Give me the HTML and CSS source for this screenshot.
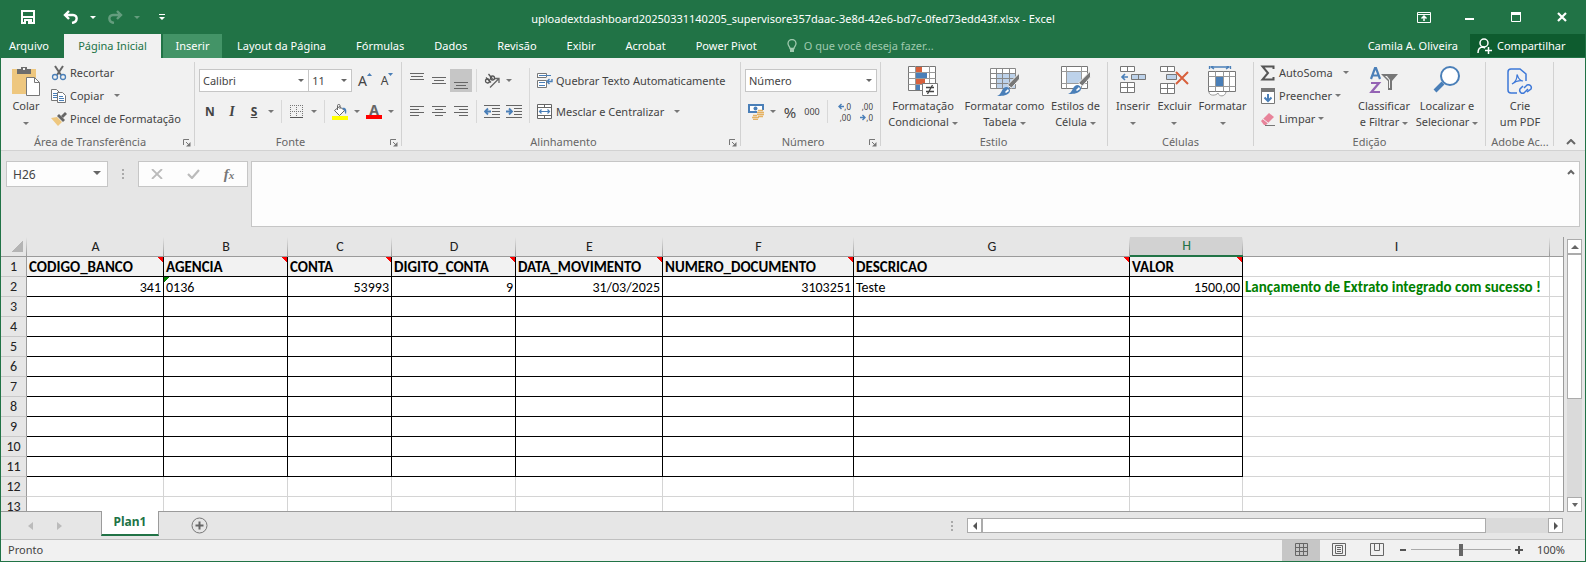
FILE: index.html
```html
<!DOCTYPE html>
<html lang="pt-BR">
<head>
    <meta charset="UTF-8">
    <meta name="viewport" content="width=device-width, initial-scale=1.0">
    <title>uploadextdashboard20250331140205.xlsx - Excel</title>
    <link rel="stylesheet" href="styles.css">
</head>
<body>
<div class="window">
    <header class="titlebar">
        <div class="quick">
            <button class="q-save" aria-label="Salvar"><svg width="14" height="14" viewBox="0 0 14 14"><path d="M1 1h12v12H1z" fill="none" stroke="#fff" stroke-width="2"/><path d="M2 6h10v2H2zM3 9h8v4H3z" fill="#fff"/><path d="M5 11h2v3H5z" fill="#217346"/></svg></button>
            <button class="q-undo" aria-label="Desfazer"><svg width="16" height="14" viewBox="0 0 16 14"><path d="M6 1L2 5l4 4M2 5h8c5 0 5 7-1 8" fill="none" stroke="#fff" stroke-width="2.400"/></svg></button>
            <button class="q-drop" aria-label="Opções de desfazer"><i class="caret"></i></button>
            <button class="q-undo off" aria-label="Refazer"><svg width="16" height="14" viewBox="0 0 16 14"><path d="M10 1l4 4-4 4M14 5H6C1 5 1 12 7 13" fill="none" stroke="#fff" stroke-width="2.400"/></svg></button>
            <button class="q-drop off" aria-label="Opções de refazer"><i class="caret"></i></button>
            <button class="q-custom" aria-label="Personalizar"><svg width="6" height="7" viewBox="0 0 6 7"><path d="M0 0h6v1H0zM0 3h6L3 6z" fill="#fff"/></svg></button>
        </div>
        <div class="title">uploadextdashboard20250331140205_supervisore357daac-3e8d-42e6-bd7c-0fed73edd43f.xlsx - Excel</div>
        <div class="win-buttons">
            <button aria-label="Exibição da faixa"><svg width="14" height="11" viewBox="0 0 14 11"><path d="M.5.5h13v10H.5zM0 2.500h14" fill="none" stroke="#fff"/><path d="M7 4v5M4.500 6.500L7 4l2.500 2.500" fill="none" stroke="#fff" stroke-width="1.500"/></svg></button>
            <button aria-label="Minimizar"><svg width="10" height="10" viewBox="0 0 10 10"><path d="M0 6h9v2H0z" fill="#fff"/></svg></button>
            <button aria-label="Maximizar"><svg width="10" height="10" viewBox="0 0 10 10"><path d="M.5.5h9v9h-9z" fill="none" stroke="#fff"/><path d="M0 0h10v3H0z" fill="#fff"/></svg></button>
            <button aria-label="Fechar"><svg width="10" height="10" viewBox="0 0 10 10"><path d="M1 1l8 8M9 1L1 9" stroke="#fff" stroke-width="2.200"/></svg></button>
        </div>
    </header>

    <nav class="tabs">
        <button class="file">Arquivo</button>
        <button class="active">Página Inicial</button>
        <button class="hover">Inserir</button>
        <button>Layout da Página</button>
        <button>Fórmulas</button>
        <button>Dados</button>
        <button>Revisão</button>
        <button>Exibir</button>
        <button>Acrobat</button>
        <button>Power Pivot</button>
        <label class="tell-me">
            <svg width="10" height="14" viewBox="0 0 10 14"><path d="M3 9.500C3 7.500 1 7 1 4.500a4 4 0 0 1 8 0C9 7 7 7.500 7 9.500z" fill="none" stroke="#9fc9ae" stroke-width="1.300"/><path d="M3 10h4v3H3z" fill="#9fc9ae"/></svg>
            <input type="text" placeholder="O que você deseja fazer..." aria-label="Diga-me">
        </label>
        <span class="user">Camila A. Oliveira</span>
        <button class="share"><svg width="15" height="16" viewBox="0 0 15 16"><circle cx="7" cy="5" r="4" fill="none" stroke="#fff" stroke-width="1.500"/><path d="M1 15c0-4 2-6 5-6l2 1M8 12.500h7M11.500 9v7" fill="none" stroke="#fff" stroke-width="1.500"/></svg>Compartilhar</button>
    </nav>

    <div class="ribbon">
        <section class="group g-clip">
            <div class="group-body">
                <button class="big"><svg width="28" height="31" viewBox="0 0 28 31"><path d="M0 3h24v25H0z" fill="#eec77f"/><path d="M5 3h4V1h6v2h4v5H5z" fill="#6d6d6d"/><path d="M11 2h2v2h-2z" fill="#f1f1f1"/><path d="M14.500 11.500h8l5 5v13h-13z" fill="#fff" stroke="#777"/><path d="M22.500 11.500v5h5" fill="none" stroke="#777"/></svg><span>Colar<br><i class="caret"></i></span></button>
                <div class="stack">
                    <button><svg width="16" height="16" viewBox="0 0 16 16"><path d="M4 1l6 9M12 1L6 10" stroke="#666" stroke-width="2"/><circle cx="4" cy="12" r="2.500" fill="none" stroke="#4a7fb8" stroke-width="1.300"/><circle cx="12" cy="12" r="2.500" fill="none" stroke="#4a7fb8" stroke-width="1.300"/></svg>Recortar</button>
                    <button><svg width="16" height="16" viewBox="0 0 16 16"><path d="M.5 1.500h5l3 3v8h-8z" fill="#fff" stroke="#777"/><path d="M2 5.500h4M2 7.500h4M2 9.500h4" stroke="#4a7fb8"/><path d="M6.500 4.500h5l3 3v7h-8z" fill="#fff" stroke="#777"/><path d="M8 8.500h4M8 10.500h5M8 12.500h5" stroke="#4a7fb8"/></svg>Copiar <i class="caret far"></i></button>
                    <button><svg width="16" height="16" viewBox="0 0 16 16"><path d="M0 7l6-1 5 5-4 4z" fill="#eec77f"/><path d="M6 5l2-2 6 6-2 2z" fill="#666"/><path d="M10 5l4-4 2 2-4 4z" fill="#666"/></svg>Pincel de Formatação</button>
                </div>
            </div>
            <h2>Área de Transferência</h2>
            <button class="launcher" aria-label="Mais opções"><svg width="8" height="8" viewBox="0 0 8 8"><path d="M.5 6V.5H6M3 3l3 3" fill="none" stroke="#777"/><path d="M7.500 3v4.500H3z" fill="#777"/></svg></button>
        </section>

        <section class="group g-font">
            <div class="group-body rows">
                <div class="row">
                    <span class="combo c-font"><select aria-label="Fonte"><option>Calibri</option></select></span>
                    <span class="combo c-size"><select aria-label="Tamanho"><option>11</option></select></span>
                    <button class="tool letter grow" aria-label="Aumentar fonte">A<svg width="5" height="3" viewBox="0 0 5 3"><path d="M0 3L2.500 0 5 3z" fill="#4a7fb8"/></svg></button>
                    <button class="tool letter shrink" aria-label="Diminuir fonte">A<svg width="5" height="3" viewBox="0 0 5 3"><path d="M0 0h5L2.500 3z" fill="#4a7fb8"/></svg></button>
                </div>
                <div class="row">
                    <button class="tool"><b>N</b></button>
                    <button class="tool serif"><b><em>I</em></b></button>
                    <button class="tool"><b><u>S</u></b></button>
                    <button class="drop" aria-label="Sublinhado"><i class="caret"></i></button>
                    <i class="sep"></i>
                    <button class="tool" aria-label="Bordas"><svg width="14" height="14" viewBox="0 0 14 14"><path d="M0 .5h14M0 6.500h14M.5 0v13M6.500 0v13M12.500 0v13" fill="none" stroke="#777" stroke-dasharray="1 1"/><path d="M0 12.500h13" stroke="#555"/></svg></button>
                    <button class="drop" aria-label="Mais bordas"><i class="caret"></i></button>
                    <i class="sep"></i>
                    <button class="tool" aria-label="Cor de preenchimento"><svg width="16" height="16" viewBox="0 0 16 16"><path d="M2.500 6.500l5-4 5 4-5 5z" fill="#fff" stroke="#666"/><path d="M5.500 6V1.500C5.500 0 8 0 8 1.500V5" fill="none" stroke="#666"/><path d="M10 4c4-1 5 2 4 6-1 0-1-3-2-4z" fill="#4a7fb8"/><path d="M0 12h16v4H0z" fill="#ff0"/></svg></button>
                    <button class="drop" aria-label="Cores de preenchimento"><i class="caret"></i></button>
                    <button class="tool color" aria-label="Cor da fonte">A</button>
                    <button class="drop" aria-label="Cores da fonte"><i class="caret"></i></button>
                </div>
            </div>
            <h2>Fonte</h2>
            <button class="launcher" aria-label="Mais opções"><svg width="8" height="8" viewBox="0 0 8 8"><path d="M.5 6V.5H6M3 3l3 3" fill="none" stroke="#777"/><path d="M7.500 3v4.500H3z" fill="#777"/></svg></button>
        </section>

        <section class="group g-align">
            <div class="group-body">
                <div class="rows align-left">
                    <div class="row">
                        <button class="tool" aria-label="Alinhar em cima"><svg width="14" height="16" viewBox="0 0 14 16"><path d="M0 .5h14M1 3.500h12M0 6.500h14" stroke="#666"/></svg></button>
                        <button class="tool" aria-label="Alinhar no meio"><svg width="14" height="16" viewBox="0 0 14 16"><path d="M0 4.500h14M2 7.500h10M0 10.500h14" stroke="#666"/></svg></button>
                        <button class="tool on" aria-label="Alinhar embaixo"><svg width="14" height="16" viewBox="0 0 14 16"><path d="M0 9.500h14M2 12.500h10M0 15.500h14" stroke="#666"/></svg></button>
                        <i class="sep"></i>
                        <button class="tool" aria-label="Orientação"><svg width="16" height="16" viewBox="0 0 16 16"><path d="M6 14.500L14.500 6M10.500 5.500h4.500v4.500" fill="none" stroke="#666" stroke-width="1.300"/><circle cx="3.500" cy="8" r="2" fill="none" stroke="#555" stroke-width="1.300"/><path d="M2 4.500l5 5" stroke="#555" stroke-width="1.300"/><circle cx="8.500" cy="5" r="2" fill="none" stroke="#555" stroke-width="1.300"/><path d="M4.500 1l4 5" stroke="#555" stroke-width="1.300"/></svg></button>
                        <button class="drop" aria-label="Orientações"><i class="caret"></i></button>
                    </div>
                    <div class="row">
                        <button class="tool" aria-label="Alinhar à esquerda"><svg width="14" height="11" viewBox="0 0 14 11"><path d="M0 .5h14M0 3.500h9M0 6.500h14M0 9.500h9" stroke="#666"/></svg></button>
                        <button class="tool" aria-label="Centralizar"><svg width="14" height="11" viewBox="0 0 14 11"><path d="M0 .5h14M3 3.500h8M0 6.500h14M3 9.500h8" stroke="#666"/></svg></button>
                        <button class="tool" aria-label="Alinhar à direita"><svg width="14" height="11" viewBox="0 0 14 11"><path d="M0 .5h14M5 3.500h9M0 6.500h14M5 9.500h9" stroke="#666"/></svg></button>
                        <i class="sep"></i>
                        <button class="tool" aria-label="Diminuir recuo"><svg width="16" height="13" viewBox="0 0 16 13"><path d="M0 .5h16M8 3.500h8M8 6.500h8M8 9.500h8M0 12.500h16" stroke="#666"/><path d="M7 6.500H2M4 3.500l-3 3 3 3" fill="none" stroke="#4a7fb8" stroke-width="1.800"/></svg></button>
                        <button class="tool" aria-label="Aumentar recuo"><svg width="16" height="13" viewBox="0 0 16 13"><path d="M0 .5h16M8 3.500h8M8 6.500h8M8 9.500h8M0 12.500h16" stroke="#666"/><path d="M0 6.500h5M3 3.500l3 3-3 3" fill="none" stroke="#4a7fb8" stroke-width="1.800"/></svg></button>
                    </div>
                </div>
                <div class="rows align-right">
                    <button><svg width="16" height="16" viewBox="0 0 16 16"><path d="M.5 5V.500h9V4M.5 7.500h9v7h-9z" fill="#fff" stroke="#777"/><path d="M.5 4.500h9" stroke="#777"/><path d="M2 2.500h12M2 9.500h6M2 12.500h6" stroke="#4a7fb8"/><path d="M15 6v2.500h-4M12.500 6L10 8.500l2.500 2.500" fill="none" stroke="#4a7fb8" stroke-width="1.400"/></svg>Quebrar Texto Automaticamente</button>
                    <button><svg width="16" height="16" viewBox="0 0 16 16"><path d="M.5.500h14v14H.500zM.5 3.500h14M.5 11.500h14M7.500.500v3M7.500 11.500v3" fill="#fff" stroke="#666"/><path d="M3 7.500h9M4.500 5.500l-2 2 2 2M10.500 5.500l2 2-2 2" fill="none" stroke="#4a7fb8" stroke-width="1.200"/></svg>Mesclar e Centralizar <i class="caret far"></i></button>
                </div>
            </div>
            <h2>Alinhamento</h2>
            <button class="launcher" aria-label="Mais opções"><svg width="8" height="8" viewBox="0 0 8 8"><path d="M.5 6V.5H6M3 3l3 3" fill="none" stroke="#777"/><path d="M7.500 3v4.500H3z" fill="#777"/></svg></button>
        </section>

        <section class="group g-number">
            <div class="group-body rows">
                <div class="row">
                    <span class="combo c-number"><select aria-label="Formato de número"><option>Número</option></select></span>
                </div>
                <div class="row">
                    <button class="tool" aria-label="Formato de contabilização"><svg width="17" height="16" viewBox="0 0 17 16"><path d="M0 0h16v9H0z" fill="#4a7fb8"/><path d="M2 2h12v5H2z" fill="#fff"/><circle cx="7.500" cy="4.500" r="2" fill="#4a7fb8"/><path d="M9 6h7v7H9z" fill="#f1f1f1"/><path d="M4 12h7v4H4z" fill="#f1f1f1"/><path d="M10 6.500h5M9 8.500h7M9 10.500h7M10 12.500h5M5 11.500h4M4 13.500h7M5 15.500h5" stroke="#e5b262" stroke-width="1.300"/></svg></button>
                    <button class="drop" aria-label="Moedas"><i class="caret"></i></button>
                    <button class="tool percent">%</button>
                    <button class="tool thousands">000</button>
                    <i class="sep"></i>
                    <button class="tool decimal" aria-label="Aumentar casas decimais"><span><svg width="6" height="7" viewBox="0 0 6 7"><path d="M6 3.500H1M3.500 1L1 3.500 3.500 6" fill="none" stroke="#4a7fb8" stroke-width="1.400"/></svg>,0</span><span>,00</span></button>
                    <button class="tool decimal" aria-label="Diminuir casas decimais"><span>,00</span><span><svg width="6" height="7" viewBox="0 0 6 7"><path d="M0 3.500h5M2.500 1L5 3.500 2.500 6" fill="none" stroke="#4a7fb8" stroke-width="1.400"/></svg>,0</span></button>
                </div>
            </div>
            <h2>Número</h2>
            <button class="launcher" aria-label="Mais opções"><svg width="8" height="8" viewBox="0 0 8 8"><path d="M.5 6V.5H6M3 3l3 3" fill="none" stroke="#777"/><path d="M7.500 3v4.500H3z" fill="#777"/></svg></button>
        </section>

        <section class="group g-style">
            <div class="group-body">
                <button class="big b-cond"><svg width="30" height="31" viewBox="0 0 30 31"><path d="M.5.500h27v24H.500z" fill="#fff" stroke="#777"/><path d="M.5 6.500h27M.5 12.500h27M.5 18.500h27M7.500 0v24M21.500 0v24" stroke="#999"/><path d="M8 1h6v5H8zM8 13h9v5H8z" fill="#d8603c"/><path d="M8 7h11v5H8zM8 19h4v5H8z" fill="#4a7fb8"/><path d="M14.500 17.500h15v12h-15z" fill="#fff" stroke="#777"/><path d="M18 21.500h8M18 25.500h8M24.500 19l-5 9" stroke="#444" stroke-width="1.300"/></svg><span>Formatação<br>Condicional <i class="caret"></i></span></button>
                <button class="big b-table"><svg width="30" height="31" viewBox="0 0 30 31"><path d="M.5 2.500h25v20H.500z" fill="#fff"/><path d="M7 8h18v14H7z" fill="#bdd2ea"/><path d="M.5 2.500h25v20H.500zM.5 7.500h25M.5 12.500h25M.5 17.500h25M6.500 2v20M12.500 2v20M19.500 2v20" fill="none" stroke="#888"/><path d="M29.500 7v6l-8 9-4-3z" fill="#777" stroke="#f1f1f1"/><path d="M7 30c5-1 4-9 10-9 3 1 4 4 2 6-3 3-8 3-12 3z" fill="#4a7fb8"/><path d="M15 26l3-3 1 2-3 2z" fill="#fff"/></svg><span>Formatar como<br>Tabela <i class="caret"></i></span></button>
                <button class="big b-cell"><svg width="30" height="31" viewBox="0 0 30 31"><path d="M.5.500h26v22H.500z" fill="#fff" stroke="#777"/><path d="M.5 5.500h26M.5 17.500h26M5.500.500v22M20.500.500v22" stroke="#999"/><path d="M6 6h14v11H6z" fill="#bdd2ea"/><path d="M29.500 5v6l-8 9-4-3z" fill="#777" stroke="#f1f1f1"/><path d="M7 28c5-1 4-9 10-9 3 1 4 4 2 6-3 3-8 3-12 3z" fill="#4a7fb8"/><path d="M15 24l3-3 1 2-3 2z" fill="#fff"/></svg><span>Estilos de<br>Célula <i class="caret"></i></span></button>
            </div>
            <h2>Estilo</h2>
        </section>

        <section class="group g-cells">
            <div class="group-body">
                <button class="big b-ins"><svg width="27" height="31" viewBox="0 0 27 31"><path d="M.5.500h14v5H.500zM7.500.500v5M.5 16.500h14v10H.500zM.5 21.500h14M7.500 16.500v10" fill="#fff" stroke="#777"/><path d="M11.500 8.500h14v5h-14zM18.500 8.500v5" fill="#bdd2ea" stroke="#777"/><path d="M8 11H2M5 8l-3 3 3 3" fill="none" stroke="#4a7fb8" stroke-width="1.600"/></svg><span>Inserir<br><i class="caret"></i></span></button>
                <button class="big b-del"><svg width="30" height="31" viewBox="0 0 30 31"><path d="M.5.500h14v5H.500zM7.500.500v5M.5 17.500h14v10H.500zM.5 22.500h14M7.500 17.500v10" fill="#fff" stroke="#777"/><path d="M6.500 8.500h10v5h-10z" fill="#bdd2ea" stroke="#777"/><path d="M16 6l12 12M28 6L16 18" stroke="#d8603c" stroke-width="2"/></svg><span>Excluir<br><i class="caret"></i></span></button>
                <button class="big b-fmt"><svg width="29" height="31" viewBox="0 0 29 31"><path d="M1.500 0v4M22.500 0v4M3 2h18M6 0L3 2l3 2M18 0l3 2-3 2" transform="translate(0 -1)" fill="none" stroke="#4a7fb8" stroke-width="1.300"/><path d="M.5 5.500h27v20H.500z" fill="#fff" stroke="#777"/><path d="M.5 10.500h27M.5 20.500h27M7.500 5.500v20M15.500 5.500v20M21.500 5.500v20" stroke="#999"/><path d="M8 11h7v9H8z" fill="#4a7fb8"/><path d="M1 26c0 4 7 4 9 1 1 4 7 4 8-1" fill="#fff" stroke="#999"/></svg><span>Formatar<br><i class="caret"></i></span></button>
            </div>
            <h2>Células</h2>
        </section>

        <section class="group g-edit">
            <div class="group-body">
                <div class="stack">
                    <button><svg width="16" height="16" viewBox="0 0 16 16"><path d="M13.500 4V1.500H2.500L8 8l-5.500 6.500h11V12" fill="none" stroke="#555" stroke-width="2"/></svg>AutoSoma <i class="caret far"></i></button>
                    <button><svg width="16" height="16" viewBox="0 0 16 16"><path d="M1.500.500h13v15h-13z" fill="#fff" stroke="#777"/><path d="M1 0h14v4H1z" fill="#777"/><path d="M8 6v7M4.500 9.500L8 13l3.500-3.500" fill="none" stroke="#4a7fb8" stroke-width="2"/></svg>Preencher <i class="caret"></i></button>
                    <button><svg width="16" height="16" viewBox="0 0 16 16"><path d="M1 10l8-8 5 4-8 8H4z" fill="#e8839a"/><path d="M3 8l5 4" stroke="#f1f1f1"/><path d="M5 14.500h10" stroke="#777"/></svg>Limpar <i class="caret"></i></button>
                </div>
                <button class="big b-sort"><svg width="30" height="31" viewBox="0 0 30 31"><path d="M2 13L6 2h1l4 11M3 9.500h7" fill="none" stroke="#4a7fb8" stroke-width="2.200"/><path d="M2 17h8L2.500 26H11" fill="none" stroke="#9463b4" stroke-width="2.200"/><path d="M12 8h17l-6 7v9h-4v-9z" fill="#777"/><path d="M16 10h2l3 4v8h-1v-8z" fill="#f1f1f1"/></svg><span>Classificar<br>e Filtrar <i class="caret"></i></span></button>
                <button class="big b-find"><svg width="28" height="31" viewBox="0 0 28 31"><circle cx="17" cy="10" r="9" fill="#fff" stroke="#4a7fb8" stroke-width="2"/><path d="M10 17l-8 8" stroke="#4a7fb8" stroke-width="4"/></svg><span>Localizar e<br>Selecionar <i class="caret"></i></span></button>
            </div>
            <h2>Edição</h2>
        </section>

        <section class="group g-adobe">
            <div class="group-body">
                <button class="big"><svg width="26" height="31" viewBox="0 0 26 31"><path d="M10 27H4a3 3 0 0 1-3-3V6a3 3 0 0 1 3-3h9l6 5v7" fill="none" stroke="#3d78d8" stroke-width="1.500"/><path d="M5 18c4-2 5-6 5-9 1-1 0 5 6 6-3-1-7 0-11 3z" fill="none" stroke="#3d78d8" stroke-width="1.200"/><path d="M16 21l3-3a3 3 0 0 1 4 4l-4 3M20 22l-4 4a3 3 0 0 1-4-4l3-3" transform="translate(1 1)" fill="none" stroke="#3d78d8" stroke-width="1.500"/></svg><span>Crie<br>um PDF</span></button>
            </div>
            <h2>Adobe Ac...</h2>
        </section>
        <button class="collapse" aria-label="Recolher"><svg width="10" height="6" viewBox="0 0 10 6"><path d="M1 5l4-4 4 4" fill="none" stroke="#666" stroke-width="2"/></svg></button>
    </div>

    <div class="formula-bar">
        <div class="name-box">
            <input type="text" value="H26" aria-label="Caixa de nome">
        </div>
        <div class="dots"></div>
        <div class="fx-buttons">
            <button aria-label="Cancelar"><svg width="12" height="10" viewBox="0 0 12 10"><path d="M1 0l10 10M11 0L1 10" stroke="#bbb" stroke-width="1.800"/></svg></button>
            <button aria-label="Inserir"><svg width="13" height="10" viewBox="0 0 13 10"><path d="M1 5l4 4 7-8" fill="none" stroke="#bbb" stroke-width="2.200"/></svg></button>
            <button class="fx" aria-label="Inserir função"><em>f<small>x</small></em></button>
        </div>
        <div class="formula">
            <textarea aria-label="Barra de fórmulas"></textarea>
            <button aria-label="Recolher barra"><svg width="8" height="6" viewBox="0 0 8 6"><path d="M1 5l3-3 3 3" fill="none" stroke="#666" stroke-width="2"/></svg></button>
        </div>
    </div>

    <main class="sheet">
        <div class="pane">
            <table>
                <colgroup>
                    <col class="w-row"><col class="w-a"><col class="w-b"><col class="w-c"><col class="w-d"><col class="w-e"><col class="w-f"><col class="w-g"><col class="w-h"><col class="w-i"><col>
                </colgroup>
                <thead>
                    <tr><th class="corner"></th><th>A</th><th>B</th><th>C</th><th>D</th><th>E</th><th>F</th><th>G</th><th class="selected">H</th><th>I</th><th class="rest"></th></tr>
                </thead>
                <tbody id="rows">
                    <tr class="names boxed"><th>1</th><td>CODIGO_BANCO</td><td>AGENCIA</td><td>CONTA</td><td>DIGITO_CONTA</td><td>DATA_MOVIMENTO</td><td>NUMERO_DOCUMENTO</td><td>DESCRICAO</td><td>VALOR</td><td></td><td></td></tr>
                    <tr class="boxed"><th>2</th><td class="num">341</td><td class="as-text">0136</td><td class="num">53993</td><td class="num">9</td><td class="num">31/03/2025</td><td class="num">3103251</td><td>Teste</td><td class="num">1500,00</td><td class="ok">Lançamento de Extrato integrado com sucesso !</td><td></td></tr>
                </tbody>
            </table>
        </div>
        <div class="vscroll">
            <button aria-label="Para cima"><svg width="8" height="4" viewBox="0 0 8 4"><path d="M0 4l4-4 4 4z" fill="#666"/></svg></button>
            <div class="thumb"></div>
            <button aria-label="Para baixo"><svg width="6" height="4" viewBox="0 0 6 4"><path d="M0 0h6L3 4z" fill="#666"/></svg></button>
        </div>
    </main>

    <div class="sheet-bar">
        <div class="sheet-nav">
            <button aria-label="Anterior"><svg width="5" height="8" viewBox="0 0 5 8"><path d="M5 0v8L0 4z" fill="#bbb"/></svg></button>
            <button aria-label="Próxima"><svg width="5" height="8" viewBox="0 0 5 8"><path d="M0 0v8l5-4z" fill="#bbb"/></svg></button>
        </div>
        <button class="sheet-tab">Plan1</button>
        <button class="add-sheet" aria-label="Nova planilha"><svg width="17" height="17" viewBox="0 0 17 17"><circle cx="8.500" cy="8.500" r="7.500" fill="none" stroke="#777"/><path d="M4.500 8.500h8M8.500 4.500v8" stroke="#666" stroke-width="2"/></svg></button>
        <div class="dots"></div>
        <div class="hscroll">
            <button aria-label="Para a esquerda"><svg width="4" height="8" viewBox="0 0 4 8"><path d="M4 0v8L0 4z" fill="#555"/></svg></button>
            <div class="thumb"></div>
            <button aria-label="Para a direita"><svg width="4" height="8" viewBox="0 0 4 8"><path d="M0 0v8l4-4z" fill="#555"/></svg></button>
        </div>
    </div>

    <footer class="status">
        <span class="ready">Pronto</span>
        <button class="view on" aria-label="Normal"><svg width="13" height="13" viewBox="0 0 13 13"><path d="M.5.500h12v12H.500zM.5 4.500h12M.5 8.500h12M4.500.500v12M8.500.500v12" fill="none" stroke="#666"/></svg></button>
        <button class="view" aria-label="Layout da página"><svg width="14" height="13" viewBox="0 0 14 13"><path d="M.5.500h13v12H.500zM3.500 2.500h7v8h-7zM5 4.500h4M5 6.500h4M5 8.500h4" fill="none" stroke="#666"/></svg></button>
        <button class="view" aria-label="Quebra de página"><svg width="14" height="13" viewBox="0 0 14 13"><path d="M.5.500h13v12H.500zM4.500.500v7h5M9.500.500v7" fill="none" stroke="#666"/></svg></button>
        <button class="zoom-out" aria-label="Reduzir"><svg width="6" height="2" viewBox="0 0 6 2"><path d="M0 0h6v2H0z" fill="#555"/></svg></button>
        <input class="zoom" type="range" min="0" max="100" value="50" aria-label="Zoom">
        <button class="zoom-in" aria-label="Ampliar"><svg width="8" height="8" viewBox="0 0 8 8"><path d="M0 3h8v2H0zM3 0h2v8H3z" fill="#555"/></svg></button>
        <span class="percent-label">100%</span>
    </footer>
</div>

<script>
    const rows = document.getElementById('rows');
    for (let n = 3; n <= 13; n++) {
        const tr = document.createElement('tr');
        if (n <= 11) tr.className = 'boxed';
        tr.innerHTML = `<th>${n}</th>` + '<td></td>'.repeat(10);
        rows.appendChild(tr);
    }
</script>
</body>
</html>
```
FILE: styles.css
```css
* {
    box-sizing: border-box;
}
body {
    margin: 0;
    font-family: "Noto Sans", "Open Sans", sans-serif;
    font-size: 11px;
    line-height: 16px;
    color: #444;
}
button {
    display: flex;
    align-items: center;
    justify-content: center;
    margin: 0;
    padding: 0;
    border: none;
    background: none;
    font: inherit;
    color: inherit;
    white-space: nowrap;
    flex-shrink: 0;
}
input, select, textarea {
    margin: 0;
    border: none;
    font: inherit;
    color: inherit;
    min-width: 0;
}
svg {
    display: block;
    flex-shrink: 0;
}
.window {
    display: flex;
    flex-direction: column;
    height: 100vh;
    min-height: 360px;
    overflow: hidden;
    background: #e6e6e6;
    border: 1px solid #217346;
    border-top: none;
}
.caret {
    display: inline-block;
    width: 0;
    height: 0;
    border: 3px solid transparent;
    border-top-color: #777;
    border-bottom: none;
    vertical-align: middle;
}

/* title bar */
.titlebar {
    display: grid;
    grid-template-columns: 1fr auto 1fr;
    align-items: center;
    height: 34px;
    flex-shrink: 0;
    background: #217346;
    color: #fff;
}
.title {
    padding-top: 3px;
}
.quick, .win-buttons {
    display: flex;
    height: 32px;
}
.quick .caret {
    border-top-color: #fff;
}
.q-save {
    width: 54px;
}
.q-undo {
    width: 32px;
}
.q-drop {
    width: 12px;
}
.q-custom {
    width: 38px;
}
.off {
    opacity: 0.3;
}
.win-buttons {
    justify-content: flex-end;
}
.win-buttons button {
    width: 46px;
}

/* ribbon tabs */
.tabs {
    display: flex;
    height: 24px;
    flex-shrink: 0;
    background: #217346;
    color: #fff;
}
.tabs button {
    padding: 0 15px;
}
.tabs .file {
    width: 63px;
    padding: 0 8px;
    justify-content: flex-start;
}
.tabs .active {
    background: #f1f1f1;
    color: #217346;
    width: 97px;
}
.tabs .hover {
    margin-left: 2px;
    background: #439467;
    width: 59px;
}
.tell-me {
    display: flex;
    flex: 1;
    align-items: center;
    gap: 7px;
    margin-left: 15px;
}
.tell-me input {
    flex: 1;
    padding: 0;
    background: none;
}
.tell-me input::placeholder {
    color: #9fc9ae;
    opacity: 1;
}
.user {
    padding: 4px 12px 0;
}
.tabs .share {
    gap: 5px;
    width: 115px;
    height: 23px;
    padding: 0 7px;
    justify-content: flex-start;
    background: #0e5c2f;
}

/* ribbon */
.ribbon {
    display: flex;
    height: 93px;
    flex-shrink: 0;
    background: #f1f1f1;
    border-bottom: 1px solid #d2d2d2;
}
.group {
    position: relative;
    display: flex;
    flex-direction: column;
    flex-shrink: 0;
    height: 92px;
    background: linear-gradient(#d2d2d2, #d2d2d2) right 4px / 1px 84px no-repeat;
}
.group h2 {
    margin: 0;
    font-size: 11px;
    font-weight: normal;
    text-align: center;
    color: #666;
}
.group-body {
    display: flex;
    flex: 1;
}
.g-clip { width: 194px; }
.g-font { width: 207px; }
.g-align { width: 339px; }
.g-number { width: 140px; }
.g-style { width: 227px; padding-left: 4px; }
.g-cells { width: 146px; padding-left: 5px; }
.g-edit { width: 232px; padding-left: 5px; }
.g-adobe { width: 68px; }
.g-clip h2, .g-font h2, .g-align h2, .g-number h2 {
    padding-right: 16px;
}
.g-style h2, .g-cells h2, .g-edit h2 {
    padding-right: 6px;
}
.launcher {
    position: absolute;
    right: 4px;
    bottom: 3px;
}
.big {
    flex-direction: column;
    justify-content: flex-start;
    padding-top: 8px;
    text-align: center;
}
.big svg {
    margin-bottom: 1px;
}
.g-clip .big { width: 50px; }
.b-cond { width: 76px; }
.b-table { width: 87px; }
.b-cell { width: 55px; }
.b-ins { width: 40px; }
.b-del { width: 43px; }
.b-fmt { width: 53px; }
.b-sort { width: 58px; }
.b-find { width: 68px; }
.g-adobe .big { width: 100%; }
.stack {
    display: flex;
    flex-direction: column;
    padding-top: 3px;
}
.stack button {
    justify-content: flex-start;
    height: 23px;
    gap: 3px;
}
.g-edit .stack {
    width: 96px;
    padding-left: 1px;
}
.far {
    margin-left: 7px;
}
.rows {
    display: flex;
    flex-direction: column;
    gap: 8px;
    padding: 11px 4px 0;
}
.row {
    display: flex;
    height: 23px;
}
.combo {
    position: relative;
    display: flex;
}
.combo::after, .name-box::after {
    content: "";
    position: absolute;
    right: 5px;
    top: 10px;
    border: 3px solid transparent;
    border-top-color: #666;
    border-bottom: none;
    pointer-events: none;
}
.combo select {
    appearance: none;
    width: 100%;
    padding: 0 3px;
    background: #fff;
    border: 1px solid #c6c6c6;
    border-radius: 0;
}
.c-font { width: 111px; }
.c-size { width: 43px; margin-right: 2px; }
.c-size select { border-left: none; }
.c-number { width: 132px; }
.tool {
    width: 22px;
    font-size: 12px;
}
.tool.on {
    background: #c6c6c6;
}
.drop {
    width: 12px;
}
.sep {
    width: 1px;
    margin: 0 4px;
    background: #d8d8d8;
}
.serif {
    font-family: "Liberation Serif", serif;
    font-size: 14px;
}
.letter {
    align-items: flex-start;
    line-height: 24px;
    font-size: 14px;
}
.letter svg {
    margin-top: 4px;
}
.shrink {
    font-size: 12px;
}
.color {
    align-items: flex-start;
    font-size: 14px;
    line-height: 19px;
    font-weight: bold;
    color: #666;
    background: linear-gradient(red, red) center 15px / 16px 4px no-repeat;
}
.percent {
    font-size: 15px;
}
.thousands {
    font-size: 9px;
}
.decimal {
    flex-direction: column;
    align-items: flex-end;
    padding-right: 3px;
    font-size: 8px;
    line-height: 11px;
}
.decimal span {
    display: flex;
    align-items: center;
}
.align-left {
    width: 127px;
}
.align-right {
    padding-left: 8px;
    background: linear-gradient(#d8d8d8, #d8d8d8) left 10px / 1px 55px no-repeat;
}
.align-right button {
    justify-content: flex-start;
    height: 23px;
    gap: 3px;
}
.collapse {
    width: 16px;
    height: 16px;
    margin: auto 6px 0 auto;
}

/* formula bar */
.formula-bar {
    display: flex;
    align-items: flex-start;
    padding: 10px 5px;
    flex-shrink: 0;
}
.name-box {
    position: relative;
    width: 102px;
}
.name-box::after {
    right: 7px;
    border-width: 4px 4px 0;
}
.name-box input {
    display: block;
    width: 100%;
    height: 26px;
    padding: 0 6px;
    border: 1px solid #c6c6c6;
    background: #fdfdfd;
    font-size: 12px;
}
.dots {
    width: 30px;
    height: 26px;
    background: radial-gradient(circle, #aaa 1px, transparent 1px) center / 2px 4px no-repeat,
        radial-gradient(circle, #aaa 1px, transparent 1px) center 7px / 2px 4px no-repeat,
        radial-gradient(circle, #aaa 1px, transparent 1px) center 15px / 2px 4px no-repeat;
}
.fx-buttons {
    display: flex;
    width: 110px;
    height: 26px;
    margin-right: 3px;
    border: 1px solid #c6c6c6;
    background: #fdfdfd;
}
.fx-buttons button {
    flex: 1;
}
.fx {
    font-family: "Liberation Serif", serif;
    font-size: 15px;
    font-weight: bold;
    color: #777;
}
.fx small {
    font-size: 11px;
}
.formula {
    position: relative;
    display: flex;
    flex: 1;
    height: 66px;
}
.formula textarea {
    flex: 1;
    padding: 4px;
    border: 1px solid #c6c6c6;
    background: #fdfdfd;
    resize: none;
}
.formula button {
    position: absolute;
    top: 8px;
    right: 5px;
}

/* cells */
.sheet {
    display: flex;
    flex: 1;
    min-height: 0;
}
.pane {
    flex: 1;
    overflow: hidden;
    border-right: 1px solid #9b9b9b;
    border-bottom: 1px solid #9b9b9b;
    background: #fff;
}
table {
    width: 100%;
    table-layout: fixed;
    border-collapse: separate;
    border-spacing: 0;
    font-family: Carlito, Lato, sans-serif;
    font-size: 14px;
    line-height: 19px;
    color: #000;
}
.w-row { width: 26px; }
.w-a { width: 137px; }
.w-b { width: 124px; }
.w-c { width: 104px; }
.w-d { width: 124px; }
.w-e { width: 147px; }
.w-f { width: 191px; }
.w-g { width: 276px; }
.w-h { width: 113px; }
.w-i { width: 307px; }
th, td {
    height: 20px;
    padding: 0;
    overflow: hidden;
    white-space: nowrap;
}
th {
    font-weight: normal;
    color: #222;
}
thead th {
    border-bottom: 1px solid #9b9b9b;
    background: linear-gradient(#e6e6e6, #9b9b9b) right / 1px 100% no-repeat #e6e6e6;
}
thead .corner {
    background: linear-gradient(#e6e6e6, #9b9b9b) right / 1px 100% no-repeat,
        linear-gradient(135deg, transparent 50%, #b4b4b4 50%) 11px 4px / 11px 11px no-repeat #e6e6e6;
}
thead .selected {
    background-color: #d2d2d2;
    border-bottom: 2px solid #217346;
    color: #217346;
    line-height: 18px;
}
thead .rest {
    background: #e6e6e6;
}
tbody th {
    border-right: 1px solid #9b9b9b;
    border-bottom: 1px solid #c8c8c8;
    background: #e6e6e6;
}
td {
    padding: 2px 2px 0;
    line-height: 17px;
    background: #fff;
    border-right: 1px solid #d4d4d4;
    border-bottom: 1px solid #d4d4d4;
}
td:last-child {
    border-right: none;
}
.boxed td:nth-child(-n+9) {
    border-color: #000;
}
.names td {
    font-size: 15px;
    font-weight: bold;
}
.names td:nth-child(-n+9) {
    background: linear-gradient(225deg, red 4px, transparent 4px) #f2f2f2;
}
.num {
    text-align: right;
}
.as-text {
    background: linear-gradient(135deg, green 4px, transparent 4px) #fff;
}
.ok {
    font-size: 15px;
    font-weight: bold;
    color: green;
}

/* scroll bars */
.vscroll {
    display: flex;
    flex-direction: column;
    width: 15px;
    margin: 2px 3px 0;
    background: #dadada;
}
.vscroll button, .hscroll button {
    width: 15px;
    height: 15px;
    border: 1px solid #ababab;
    background: #fff;
}
.thumb {
    border: 1px solid #ababab;
    background: #fff;
}
.vscroll .thumb {
    flex: 0 1 145px;
    margin-bottom: auto;
}
.hscroll {
    display: flex;
    width: 596px;
    height: 15px;
    background: #dadada;
}
.hscroll .thumb {
    flex: 0 1 504px;
    margin-right: auto;
}

/* sheet tabs */
.sheet-bar {
    display: flex;
    align-items: center;
    height: 28px;
    flex-shrink: 0;
    padding-right: 22px;
    border-bottom: 1px solid #c0c0c0;
}
.sheet-nav {
    display: flex;
    gap: 24px;
    width: 100px;
    padding-left: 27px;
}
.sheet-tab {
    align-self: flex-start;
    width: 58px;
    height: 25px;
    margin-top: -1px;
    position: relative;
    padding-bottom: 1px;
    background: #fff;
    border: 1px solid #9b9b9b;
    border-top: none;
    border-bottom: 2px solid #217346;
    font-size: 12px;
    font-weight: bold;
    color: #217346;
}
.add-sheet {
    margin: 0 auto 0 32px;
}

/* status bar */
.status {
    display: flex;
    align-items: center;
    height: 21px;
    flex-shrink: 0;
    padding-right: 20px;
    background: #f1f1f1;
}
.status svg {
    margin-bottom: 2px;
}
.ready {
    flex: 1;
    padding: 0 0 1px 7px;
}
.view {
    width: 38px;
    height: 21px;
}
.view.on {
    background: #c6c6c6;
}
.zoom-out {
    margin: 0 5px 0 4px;
}
.zoom-in {
    margin-left: 4px;
}
.zoom {
    appearance: none;
    width: 100px;
    height: 12px;
    margin-bottom: 2px;
    background: linear-gradient(#aaa, #aaa) center / 100% 1px no-repeat;
}
.zoom::-webkit-slider-thumb {
    appearance: none;
    width: 4px;
    height: 12px;
    background: #666;
}
.percent-label {
    width: 42px;
    padding-bottom: 1px;
    text-align: right;
}
```
